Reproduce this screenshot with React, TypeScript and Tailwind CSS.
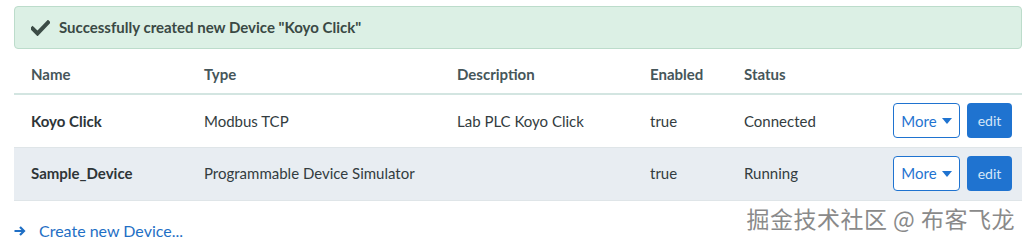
import React from "react";

const rows = [
  { name: "Koyo Click", type: "Modbus TCP", desc: "Lab PLC Koyo Click", enabled: "true", status: "Connected" },
  { name: "Sample_Device", type: "Programmable Device Simulator", desc: "", enabled: "true", status: "Running" },
];

function Caret() {
  return (
    <svg width="10" height="6" viewBox="0 0 10 6" className="ml-[5px]">
      <path d="M0 0 L10 0 L5 6 Z" fill="#1f73d0" />
    </svg>
  );
}

export default function App() {
  return (
    <div className="relative w-[1028px] h-[245px] bg-white overflow-hidden" style={{ fontFamily: "Lato, 'Noto Sans', sans-serif" }}>
      <div className="pl-[14px] pr-[6px] pt-[6px]">
        <div className="h-[43px] flex items-center rounded-[4px] border border-[#bcdccb] bg-[#dcf0e5] pl-[16px]">
          <svg width="19" height="16" viewBox="0 0 19 16">
            <path d="M1.5 8.5 L6.5 13.5 L17 2.5" fill="none" stroke="#3c4c46" strokeWidth="4" strokeLinecap="square" />
          </svg>
          <span className="ml-[9px] text-[15px] font-bold text-[#3a4944]">Successfully created new Device "Koyo Click"</span>
        </div>
        <table className="w-full mt-[7px] border-collapse text-[15px] text-[#333c40]">
          <colgroup>
            <col className="w-[173px]" />
            <col className="w-[253px]" />
            <col className="w-[193px]" />
            <col className="w-[94px]" />
            <col className="w-[140px]" />
            <col />
          </colgroup>
          <thead>
            <tr className="border-b-2 border-[#d3e5e1] h-[38px]">
              {["Name", "Type", "Description", "Enabled", "Status", ""].map((h, i) => (
                <th key={i} className="text-left pl-[17px] font-bold text-[15px] text-[#46565a] align-middle">{h}</th>
              ))}
            </tr>
          </thead>
          <tbody>
            {rows.map((r, i) => (
              <tr key={r.name} className={`h-[53px] border-b border-[#dfe5e8] ${i === 1 ? "bg-[#e8edf2]" : ""}`}>
                <td className="pl-[17px] font-bold text-[#2e3538]">{r.name}</td>
                <td className="pl-[17px]">{r.type}</td>
                <td className="pl-[17px]">{r.desc}</td>
                <td className="pl-[17px]">{r.enabled}</td>
                <td className="pl-[17px]">{r.status}</td>
                <td className="pr-[10px]">
                  <div className="flex justify-end gap-[7px]">
                    <button className="h-[35px] w-[67px] rounded-[4px] border border-[#1f73d0] bg-white text-[#1f73d0] text-[15px] flex items-center justify-center">
                      More<Caret />
                    </button>
                    <button className="h-[35px] w-[45px] rounded-[4px] bg-[#1f73d0] text-[#d6e6f7] text-[14px]">edit</button>
                  </div>
                </td>
              </tr>
            ))}
          </tbody>
        </table>
        <div className="mt-[18px] flex items-center text-[#1f6fc5] text-[16px]">
          <svg width="12" height="10" viewBox="0 0 12 10">
            <path d="M0.5 5 H10 M6 1 L10 5 L6 9" fill="none" stroke="#1f6fc5" strokeWidth="2.2" />
          </svg>
          <span className="ml-[13px]">Create new Device...</span>
        </div>
      </div>
      <div
        className="absolute right-[13px] top-[201px] text-[23px] text-[#8a8a8a] tracking-[0.5px]"
        style={{ fontFamily: "'Noto Sans CJK SC', sans-serif", textShadow: "0 0 2px #fff, 0 0 2px #fff" }}
      >
        掘金技术社区 @ 布客飞龙
      </div>
    </div>
  );
}
